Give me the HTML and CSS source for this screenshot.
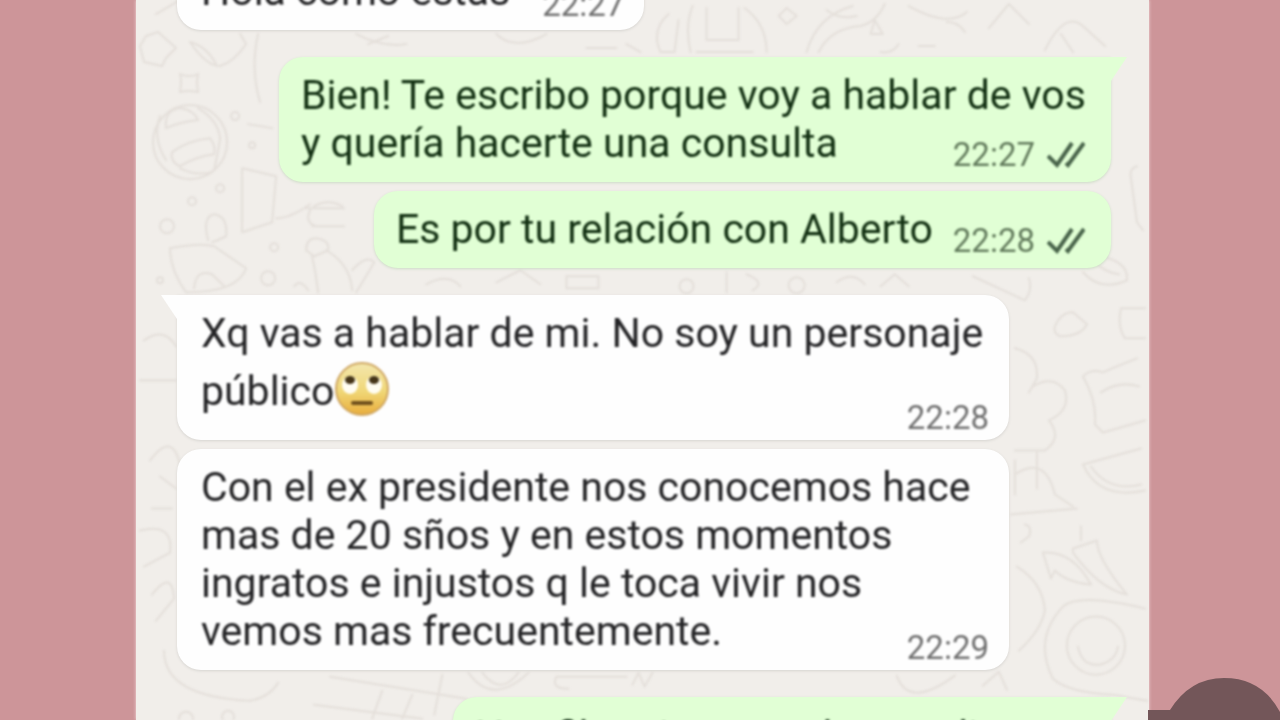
FILE: index.html
```
<!DOCTYPE html>
<html lang="es">
<head>
<meta charset="utf-8">
<title>Chat</title>
<link rel="stylesheet" href="styles.css">
</head>
<body>
<main class="chat">
  <svg class="doodles" viewBox="0 0 1012 720" preserveAspectRatio="xMidYMin slice" aria-hidden="true">
    <g>
      <circle cx="54" cy="142" r="37"/><path d="M30 128q-2-18 14-20 14 2 18 12-18 2-32 8zM24 116q-8 22 6 44M36 152q16-12 38-14 6 8 4 16-18 2-34 12-10-4-8-14zM62 108q20 12 22 30-2 14-6 32M44 168q14 8 32 4"/>
      <path d="M4 46l6-10 12-4 18 16-10 10-4 8-18-4zM54 42q16 24 30 24 14-4 26-22l-6-10M54 42q16 4 26 22M44 74q2 6 0 18 8-2 18 0-2-10 0-18-8 4-18 0zM122 34q-8 36 2 68M112 124l24 4M106 168l34 8-4 46-30 10zM140 218q14 0 34-14M170 208h38M176 226h32M174 210q-6 12 6 16M178 206q14-8 28 0"/>
      <path d="M34 248q30-6 44-2l32 22q-8 24-60 24-16-22-16-44zM72 240q-6-24 6-26 14 2 12 22-8 4-14 6M58 288q2-20 18-14l12 12M170 250q0-12 10-12 14 2 12 12l-14 6zM176 256q4 18 6 36M190 250q24 14 26 40M216 270q14-16 22-8-8 14-18 30M158 286q6-8 14 4"/>
      <circle cx="99" cy="116" r="4"/><circle cx="31" cy="226" r="7"/><circle cx="132" cy="278" r="7"/><circle cx="84" cy="188" r="4"/><circle cx="56" cy="201" r="4"/><circle cx="116" cy="145" r="3"/><circle cx="24" cy="280" r="3"/><circle cx="138" cy="247" r="4"/>
      <path d="M532 14q-18 16-8 38h14l4-32M556 6q-8 20-2 46M570 8v32h32V8M560 52h56M608 8q22 16 22 44M670 52q10-36 46-46M682 52q12-24 42-26 16-4 24-22M772 6q40 22 58 6M852 28l20-24 20 20M908 50q20-40 38-24l22 20M936 52l-12-18M690 10q12 10 30 6M650 8l10 8-10 8-8-8zM738 20l-4 14h12zM810 22q12 0 18 10M744 52q12 2 18-8M782 46h16"/>
      <path d="M954 78q12-10 14 6 0 12-12 10M1000 166q-8 2-6 12l6 44 6 8M964 256q28 6 26 24-26 12-44-8M958 262q10 10 24 12M836 276l52 24q8-10 4-22M918 326q6-14 18-14l14 12q-6 12-26 12-8-2-6-10zM984 308h24M984 308q-4 18 4 30h20M946 376q8-8 20-4l14-6 20-8M946 376q14 24 12 48l8 8 42-12M964 392q18-12 38-6M878 348q24 6 22 30l-8 14M896 386q20-12 32 4 6 20-16 30 14 18-4 30h-30M878 460v34M900 452v36"/>
      <circle cx="959" cy="645" r="29"/><path d="M941 646q4 20 22 18 16-4 18-18M1008 608q-66-16-82-2-30 32-10 72 16 14 60 16l34 6M880 566q26 16 28 44-4 20-26 40M874 514l66-6M888 524q8 2 4 12l-8 6M946 464l58-16M946 464q16 36 62 26M954 466q18 26 50 18M936 548l24-8q0 18 30 54-28-6-54-42zM906 552q30-2 48 32-24-2-36-14l-4 8zM944 526v14M878 474q30-20 40 20l18 12"/>
      <path d="M28 650q0 46 86 50 20-4 28-18M14 460q22-30 30 4M4 530q34-8 30 22l-26 14M8 340q20-14 32 6M4 380h36M16 594q20-26 22 4l-18 22M194 676l136 22M178 704l108 14M246 690l-10 28M276 694l-10 24M306 674l-8 40M332 672q24 34 60 0M346 672q18 24 36 0M420 676h70M420 676q-6 12 12 12M496 684l6-12 6 14 8-14M760 675q12 34 58 0M846 685l16-14 8 18M20 14l24-14M24 476l16 12M16 508h20"/>
      <circle cx="92" cy="716" r="6"/><circle cx="50" cy="718" r="7"/><circle cx="550" cy="286" r="7"/><circle cx="660" cy="285" r="8"/><path d="M232 44l20-8M220 34q28 14 50 10M360 34q18 18 50 0M450 48h30M490 44l14 8M290 284q22-12 34 2M360 282l24-12 20 14M430 276h32v12h-32zM590 272v20M610 274q20 8 6 16M700 282q16-12 28 2M744 286l14-12 14 12"/>
    </g>
  </svg>

  <section class="thread">
    <article class="bubble in line first">
      <p>Hola como estás</p>
      <footer><time>22:27</time></footer>
    </article>

    <article class="bubble out wide gap-l tail-out">
      <p>Bien! Te escribo porque voy a hablar de vos<br>y quería hacerte una consulta</p>
      <footer><time>22:27</time><svg class="ticks" viewBox="0 0 38 28" aria-hidden="true"><path d="M1 15l9 9L25 2M19 22l2 2L37 2"/></svg></footer>
    </article>

    <article class="bubble out line gap-s">
      <p>Es por tu relación con Alberto</p>
      <footer><time>22:28</time><svg class="ticks" viewBox="0 0 38 28" aria-hidden="true"><path d="M1 15l9 9L25 2M19 22l2 2L37 2"/></svg></footer>
    </article>

    <article class="bubble in wide gap-l tail-in">
      <p>Xq vas a hablar de mi. No soy un personaje<br>público<svg class="emoji" viewBox="0 0 56 56" role="img" aria-label="Cara con ojos en blanco">
        <defs><linearGradient id="face" x1="0" y1="0" x2="0" y2="1"><stop offset="0" stop-color="#f3e7ae"/><stop offset=".55" stop-color="#f0d777"/><stop offset="1" stop-color="#e9ad3c"/></linearGradient></defs>
        <circle cx="28" cy="28" r="26" fill="url(#face)" stroke="#cfa763" stroke-width="2"/>
        <ellipse cx="16" cy="24" rx="8" ry="9" fill="#fffdf2"/><ellipse cx="40" cy="24" rx="8" ry="9" fill="#fffdf2"/>
        <ellipse cx="16" cy="19" rx="5" ry="4" fill="#443417"/><ellipse cx="40" cy="19" rx="5" ry="4" fill="#443417"/>
        <path d="M19 42h18" stroke="#70501c" stroke-width="4" stroke-linecap="round"/>
      </svg></p>
      <footer><time>22:28</time></footer>
    </article>

    <article class="bubble in wide gap-s">
      <p>Con el ex presidente nos conocemos hace<br>mas de 20 sños y en estos momentos<br>ingratos e injustos q le toca vivir nos<br>vemos mas frecuentemente.</p>
      <footer><time>22:29</time></footer>
    </article>

    <article class="bubble out last gap-l tail-out">
      <p>Hay filtraciones en los medios</p>
    </article>
  </section>
</main>
<svg class="corner" viewBox="0 0 132 44" aria-hidden="true"><path d="M0 34h22Q42 2 76 2q38 0 56 34v8H0z"/></svg>
</body>
</html>
```
FILE: styles.css
```
* { box-sizing: border-box; }
body {
  margin: 0;
  height: 100vh;
  overflow: hidden;
  position: relative;
  background: #cd9599;
  font-family: Roboto, "Noto Sans", sans-serif;
}
.chat {
  position: relative;
  height: 100%;
  margin: 0 131px 0 136px;
  overflow: hidden;
  background: #f1eeea;
  box-shadow: 0 0 3px #f3dcdc;
}
.doodles {
  position: absolute;
  inset: 0;
  width: 100%;
  height: 100%;
  filter: blur(1px);
}
.doodles g {
  fill: none;
  stroke: #e4dfda;
  stroke-width: 2;
  stroke-linejoin: round;
  stroke-linecap: round;
}
.thread {
  position: relative;
  height: 100%;
  display: flex;
  flex-direction: column;
  justify-content: flex-start;
  padding: 0 38px 0 41px;
}
.bubble {
  position: relative;
  flex: none;
  display: grid;
  border-radius: 24px;
  padding: 14px 24px 15px;
  color: #242426;
  font-size: 41px;
  line-height: 48px;
  box-shadow: 0 1px 3px #d6d4d0;
}
.bubble p {
  grid-area: 1 / 1;
  margin: 0;
  white-space: nowrap;
  filter: blur(1px);
}
.bubble footer {
  grid-area: 1 / 1;
  place-self: end;
  display: flex;
  align-items: center;
  gap: 12px;
  margin: 0 -4px -9px 0;
  font-size: 33px;
  line-height: 32px;
  color: #6f6f6f;
  filter: blur(1px);
}
.line { display: flex; gap: 20px; }
.line footer { align-self: flex-end; }
.in { align-self: flex-start; background: #fefefe; }
.out {
  align-self: flex-end;
  padding-left: 22px;
  background: #e1ffd5;
  color: #123012;
  box-shadow: 0 1px 3px #cddcc6;
}
.bubble.out footer { margin: 0 2px -4px 0; color: #627b5c; }
.wide { width: 832px; }
.gap-l { margin-top: 27px; }
.gap-s { margin-top: 9px; }
.first { margin-top: -47px; gap: 32px; }
.bubble.first footer { margin-bottom: -6px; }
.last { width: 658px; padding-top: 15px; }
.ticks {
  width: 38px;
  height: 28px;
  fill: none;
  stroke: #48644a;
  stroke-width: 4;
}
.emoji {
  width: 56px;
  height: 56px;
  margin: 4px 0 8px;
  vertical-align: -20px;
}
.tail-in { border-top-left-radius: 0; }
.tail-out { border-top-right-radius: 0; }
.tail-in::before, .tail-out::after {
  content: "";
  position: absolute;
  top: 0;
  width: 16px;
  height: 24px;
  background: inherit;
}
.tail-in::before { right: 100%; clip-path: polygon(0 0, 100% 0, 100% 100%); }
.tail-out::after { left: 100%; clip-path: polygon(0 0, 100% 0, 0 100%); }
.corner {
  position: absolute;
  right: 0;
  bottom: 0;
  width: 132px;
  height: 44px;
  fill: #735659;
}
```
